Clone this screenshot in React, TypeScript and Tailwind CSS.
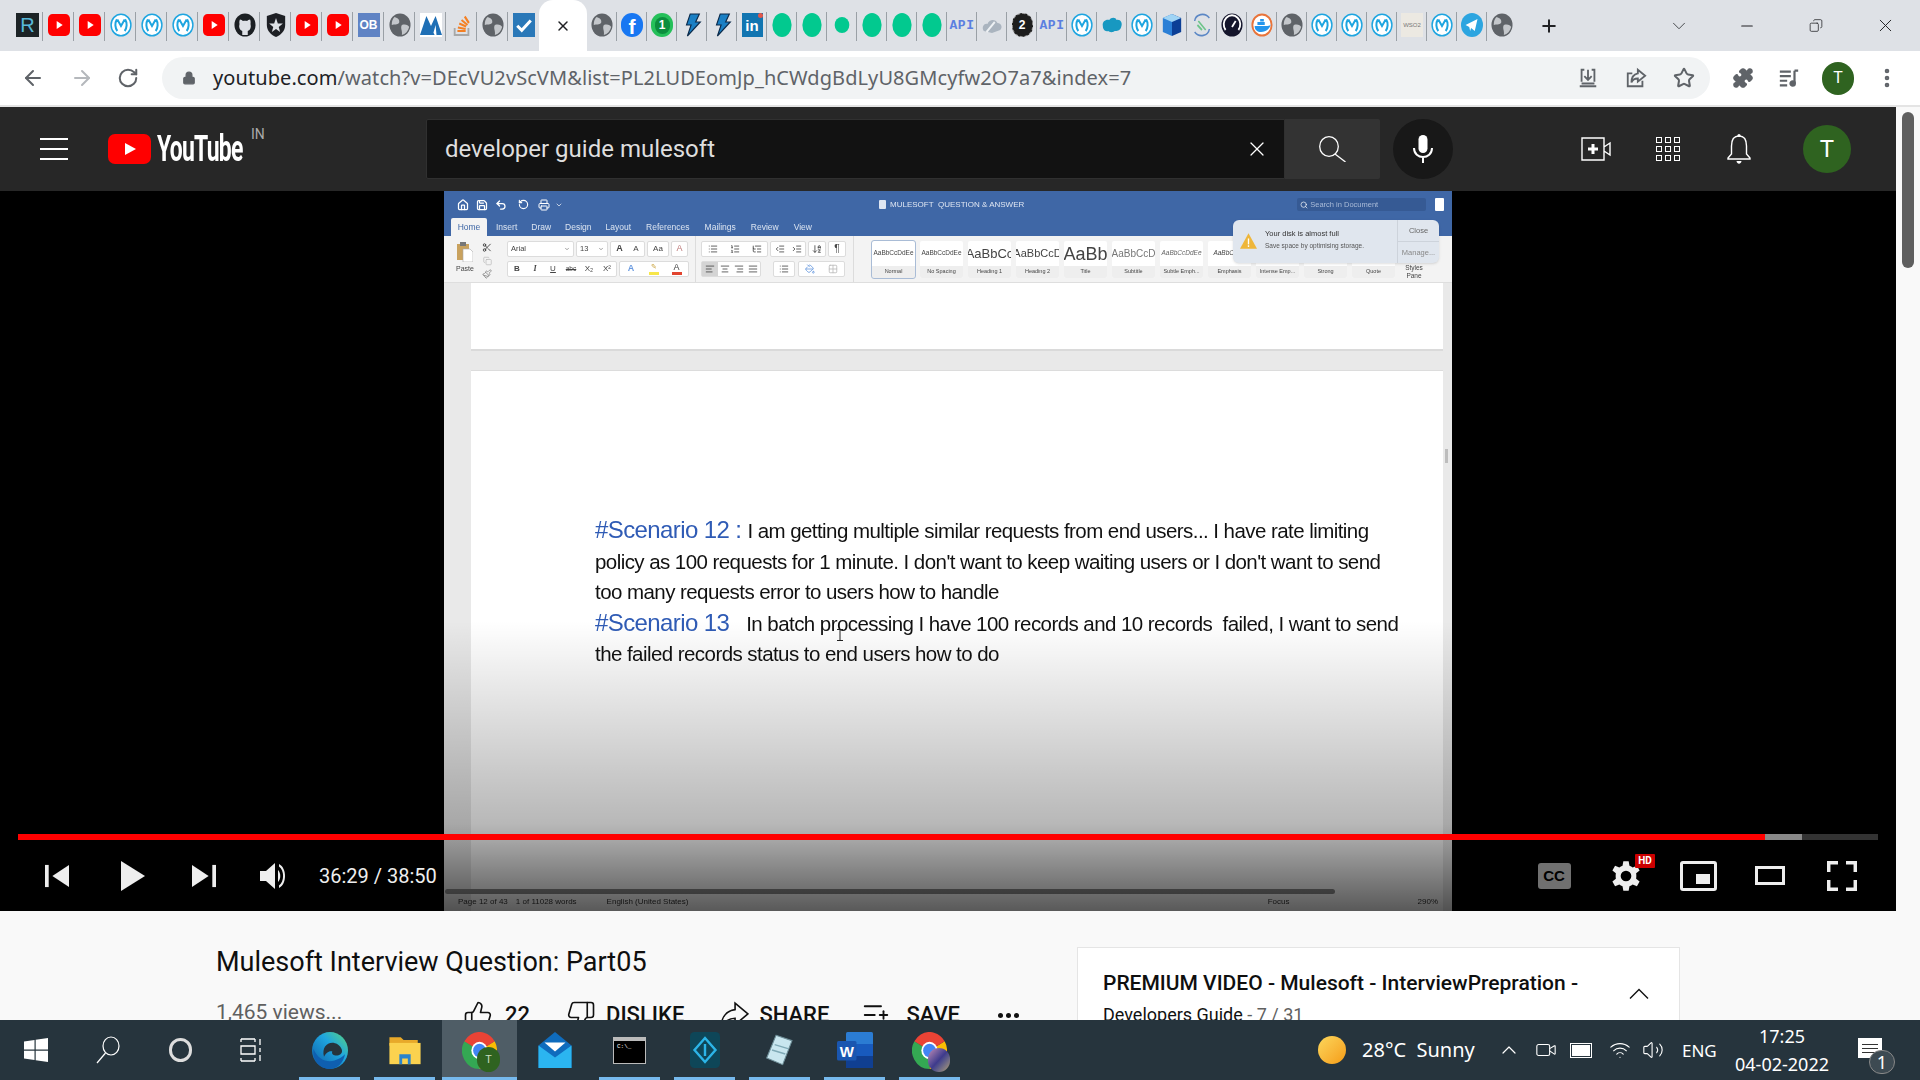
import type { ReactNode } from "react"
import { AlignCenter, AlignJustify, AlignLeft, AlignRight, ArrowDownAZ, ArrowLeft, ArrowRight, Bell, ChevronUp, Indent, List, ListOrdered, ListTree, Lock, Minus, Outdent, Plus, RotateCw, Search, Star, ThumbsDown, ThumbsUp, X, Home, Save, Undo2, RotateCcw, Printer, ChevronDown, Scissors, Copy, Paintbrush, MoreVertical, Puzzle, ListPlus, Video, Wifi, Volume2, PaintBucket, Grid2x2 } from "lucide-react"

const MuleIcon = () => (
  <svg viewBox="0 0 24 24" className="w-[22px] h-[24px]" preserveAspectRatio="none">
    <circle cx="12" cy="12" r="10.8" fill="#fff" stroke="#1ea5e0" strokeWidth="1.6" />
    <path d="M7.5 6.5 C5 10 5.5 15 8 18 M16.5 6.5 C19 10 18.5 15 16 18 M8 6.5 L12 13 L16 6.5" fill="none" stroke="#1ea5e0" strokeWidth="2.2" />
  </svg>
)
const YtIcon = () => (
  <svg viewBox="0 0 24 24" className="w-[22px] h-[24px]" preserveAspectRatio="none">
    <rect x="0" y="1" width="24" height="22" rx="5" fill="#f00" />
    <path d="M9.5 8 L16 12 L9.5 16Z" fill="#fff" />
  </svg>
)
const GlobeIcon = () => (
  <svg viewBox="0 0 24 24" className="w-[22px] h-[24px]" preserveAspectRatio="none">
    <circle cx="12" cy="12" r="11.5" fill="#5f6368" />
    <path d="M6 4 C10 5 12 7 11 10 C9 12 6 11 3 12 C3 8 4 6 6 4Z M14 12 C18 11 21 12 22 14 C21 18 18 21 14 22 C15 18 12 15 14 12Z" fill="#c4c7cb" />
  </svg>
)
const GreenIcon = ({ small }: { small?: boolean }) => (
  <svg viewBox="0 0 24 24" className="w-[22px] h-[24px]" preserveAspectRatio="none">
    <ellipse cx="12" cy="12" rx={small ? 8 : 10.5} ry={small ? 8 : 12} fill="#02c98f" />
  </svg>
)
const BoltIcon = () => (
  <svg viewBox="0 0 24 24" className="w-[22px] h-[24px]" preserveAspectRatio="none">
    <path d="M10 1 H20 L16 9 H21 L7 23 L11 12 H6Z" fill="#1a7fc4" stroke="#0b2a4a" strokeWidth="1.2" />
  </svg>
)
const ApiIcon = () => (
  <span className="text-[13px] font-bold leading-none text-[#5b7fe0] tracking-[0.5px] font-['Liberation_Mono',monospace]">API</span>
)

const Favicon = ({ kind }: { kind: string }) => {
  if (kind === "m") return <MuleIcon />
  if (kind === "yt") return <YtIcon />
  if (kind === "globe") return <GlobeIcon />
  if (kind === "g") return <GreenIcon />
  if (kind === "gs") return <GreenIcon small />
  if (kind === "bolt") return <BoltIcon />
  if (kind === "api") return <ApiIcon />
  if (kind === "r")
    return (
      <div className="w-[23px] h-[24px] bg-[#1c2326] flex items-center justify-center text-[20px] leading-none text-[#58b7d8] font-['Liberation_Sans',sans-serif]">R</div>
    )
  if (kind === "ob")
    return (
      <div className="w-[22px] h-[24px] bg-[#5f83c4] flex items-center justify-center text-[12px] font-bold leading-none text-white font-['Liberation_Sans',sans-serif]">OB</div>
    )
  if (kind === "check")
    return (
      <div className="w-[22px] h-[24px] bg-[#2a78b8] flex items-center justify-center">
        <svg viewBox="0 0 24 24" className="w-[18px] h-[18px]" fill="none" stroke="#fff" strokeWidth="4"><path d="M3 13 L9 19 L21 6" /></svg>
      </div>
    )
  if (kind === "in")
    return (
      <div className="relative w-[21px] h-[24px] bg-[#1275b1] flex items-center justify-center text-[15px] font-bold leading-none text-white font-['Liberation_Sans',sans-serif]">
        in
        <span className="absolute right-0 top-0 w-[5px] h-[5px] rounded-full bg-[#e2574c]"></span>
      </div>
    )
  if (kind === "fb")
    return (
      <div className="w-[22px] h-[24px] rounded-full bg-[#1877f2] flex items-end justify-center overflow-hidden text-[21px] font-bold leading-[21px] text-white font-['Liberation_Sans',sans-serif]">f</div>
    )
  if (kind === "wa")
    return (
      <div className="w-[22px] h-[24px] rounded-full bg-[#25c05a] flex items-center justify-center">
        <span className="w-[15px] h-[17px] rounded-full bg-[#0c8e3e] flex items-center justify-center text-[12px] font-bold leading-none text-white font-['Liberation_Sans',sans-serif]">1</span>
      </div>
    )
  if (kind === "two")
    return (
      <div className="w-[21px] h-[24px] rounded-full bg-[#1d1d1d] border border-dashed border-[#888] flex items-center justify-center text-[12px] font-bold leading-none text-white font-['Liberation_Sans',sans-serif]">2</div>
    )
  if (kind === "wso")
    return (
      <div className="w-[22px] h-[24px] bg-[#ece9e2] flex items-center justify-center text-[6px] leading-none text-[#777] font-['Liberation_Sans',sans-serif]">WSO2</div>
    )
  return (
    <svg viewBox="0 0 24 24" className="w-[22px] h-[24px]" preserveAspectRatio="none">
      {kind === "gh" && (
        <>
          <circle cx="12" cy="12" r="11.5" fill="#1b1f23" />
          <path d="M9 22 V18 C6 17 5 14 6 11 C5.6 9 6 7.5 6.5 6.5 C8 6.5 9 7.5 9.7 8 C11 7.6 13 7.6 14.3 8 C15 7.5 16 6.5 17.5 6.5 C18 7.5 18.4 9 18 11 C19 14 18 17 15 18 V22Z" fill="#dee1e6" />
        </>
      )}
      {kind === "auth" && (
        <>
          <path d="M12 0 L22 3 V12 C22 18 17 22 12 24 C7 22 2 18 2 12 V3Z" fill="#1d1f24" />
          <path d="M12 5 L14 10.5 H19.5 L15 14 L16.5 19 L12 16 L7.5 19 L9 14 L4.5 10.5 H10Z" fill="#dee1e6" />
        </>
      )}
      {kind === "mtn" && (
        <>
          <rect width="24" height="24" fill="#fff" />
          <path d="M0 22 L7 3 L12 13 L17 3 L24 22 H18 L17 12 L14 22Z M5 22 L12 15 L16 22Z" fill="#1f6fb5" />
        </>
      )}
      {kind === "so" && (
        <>
          <path d="M4 15 V22 H19 V15" fill="none" stroke="#a8a8a8" strokeWidth="2" />
          <path d="M7 18 H16 M7.5 14.5 L16 16 M9 10.5 L16.5 13.5 M11.5 7 L18 12 M15 3.5 L19.5 10" stroke="#f48024" strokeWidth="2.2" />
        </>
      )}
      {kind === "cloud" && (
        <>
          <path d="M3 18 C0 14 4 10 7 11 C9 6 16 6 18 10 C22 10 24 14 21 17 L12 20Z" fill="#aab4bf" />
          <path d="M6 19 L15 9" stroke="#eef1f4" strokeWidth="2" />
        </>
      )}
      {kind === "sf" && <path d="M2 13 C1 8 6 6 9 7 C11 4 16 4 17 7 C21 6 24 10 22 14 C21 18 17 18 15 18 C12 20 9 19 8 18 C4 19 2 16 2 13Z" fill="#1798c1" />}
      {kind === "cube" && (
        <>
          <path d="M12 1 L22 5 V19 L12 23Z" fill="#0c3f96" />
          <path d="M12 1 L2 5 V19 L12 23Z" fill="#2b7fd6" />
          <path d="M12 1 L22 5 L12 9 L2 5Z" fill="#9fd4f5" />
        </>
      )}
      {kind === "s" && (
        <>
          <path d="M20 5 C15 -1 5 1 4 8 M4 19 C9 25 19 23 20 16" fill="none" stroke="#5b87c5" strokeWidth="1.6" />
          <path d="M8 8 L16 17 M7 12 L12 17" stroke="#6cc48a" strokeWidth="1.8" />
        </>
      )}
      {kind === "gauge" && (
        <>
          <circle cx="12" cy="12" r="11.5" fill="#14152b" />
          <path d="M5 17 A9 9 0 1 1 19 17" fill="none" stroke="#fff" strokeWidth="2" />
          <path d="M12 14 L16 8" stroke="#fff" strokeWidth="2" />
        </>
      )}
      {kind === "docker" && (
        <>
          <circle cx="12" cy="12" r="10.5" fill="#fff" stroke="#e8743b" strokeWidth="2" />
          <path d="M4 13 H18 C20 13 21 12 21.5 11 C21 15 17 19 11 19 C7 19 4 17 4 13Z" fill="#2496ed" />
          <rect x="7" y="9" width="8" height="3" fill="#2496ed" />
          <rect x="10" y="6" width="4" height="2.5" fill="#2496ed" />
        </>
      )}
      {kind === "tg" && (
        <>
          <circle cx="12" cy="12" r="12" fill="#2ca5e0" />
          <path d="M5 12 L18 6 L15 18 L11 15 L10 18 L9 14Z" fill="#fff" />
        </>
      )}
    </svg>
  )
}

const leftTabs = ["r", "yt", "yt", "m", "m", "m", "yt", "gh", "auth", "yt", "yt", "ob", "globe", "mtn", "so", "globe", "check"]
const rightTabs = ["globe", "fb", "wa", "bolt", "bolt", "in", "g", "g", "gs", "g", "g", "g", "api", "cloud", "two", "api", "m", "sf", "m", "cube", "s", "gauge", "docker", "globe", "m", "m", "m", "wso", "m", "tg", "globe"]

function TabStrip() {
  return (
    <div className="h-[51px] shrink-0 bg-[#dee1e6] flex items-stretch pl-[12px]">
      {leftTabs.map((t, i) => (
        <div key={i} className="w-[31px] flex items-center justify-center relative pb-[1px]">
          <Favicon kind={t} />
          {i < 16 && <span className="absolute right-0 top-[12px] h-[29px] w-px bg-[#9aa0a6]"></span>}
        </div>
      ))}
      <div className="w-[48px] mt-0 bg-white rounded-t-[14px] flex items-center justify-center">
        <X className="w-[16px] h-[18px] text-[#202124]" strokeWidth={2.2} />
      </div>
      {rightTabs.map((t, i) => (
        <div key={i} className="w-[30px] flex items-center justify-center relative pb-[1px]">
          <Favicon kind={t} />
          {i < 30 && <span className="absolute right-0 top-[12px] h-[29px] w-px bg-[#9aa0a6]"></span>}
        </div>
      ))}
      <div className="ml-[22px] w-[20px] flex items-center justify-center">
        <Plus className="w-[22px] h-[22px] text-[#202124]" strokeWidth={2.4} />
      </div>
      <div className="ml-[112px] w-[16px] flex items-center justify-center">
        <ChevronDown className="w-[22px] h-[22px] shrink-0 text-[#3c4043]" strokeWidth={1} />
      </div>
      <div className="ml-[52px] w-[16px] flex items-center justify-center">
        <Minus className="w-[18px] h-[18px] shrink-0 text-[#202124]" strokeWidth={1.5} />
      </div>
      <div className="ml-[53px] w-[16px] flex items-center justify-center">
        <Copy className="w-[14px] h-[19px] text-[#202124] -scale-x-100" strokeWidth={1.3} />
      </div>
      <div className="ml-[52px] w-[18px] flex items-center justify-center">
        <X className="w-[21px] h-[21px] shrink-0 text-[#202124]" strokeWidth={1.1} />
      </div>
    </div>
  )
}

function AddressBar() {
  return (
    <div className="h-[56px] shrink-0 bg-white border-b-2 border-[#e4e4e4] flex items-center">
      <div className="w-[162px] flex items-center">
        <ArrowLeft className="ml-[21px] w-[24px] h-[24px] text-[#5f6368]" strokeWidth={2} />
        <ArrowRight className="ml-[25px] w-[24px] h-[24px] text-[#b5b8bc]" strokeWidth={2} />
        <RotateCw className="ml-[23px] w-[22px] h-[22px] text-[#5f6368]" strokeWidth={2.2} />
      </div>
      <div className="w-[1548px] h-[42px] rounded-full bg-[#f1f3f4] flex items-center">
        <Lock className="ml-[20px] w-[14px] h-[16px] text-[#5f6368] fill-[#5f6368]" strokeWidth={2} />
        <div className="ml-[17px] text-[20px] leading-none tracking-[0.08px] text-[#5f6368] font-['Noto_Sans',sans-serif] whitespace-nowrap">
          <span className="text-[#202124]">youtube.com</span>/watch?v=DEcVU2vScVM&amp;list=PL2LUDEomJp_hCWdgBdLyU8GMcyfw2O7a7&amp;index=7
        </div>
        <div className="ml-auto flex items-center gap-[26px] pr-[15px] text-[#5f6368]">
          <svg viewBox="0 0 24 24" className="w-[22px] h-[24px]" fill="none" stroke="currentColor" strokeWidth="2">
            <path d="M5 16 V3 H8 M16 3 H19 V16 M12 3 V14 M8 10 L12 14 L16 10 M3 21 H21 M5 18 H19" />
          </svg>
          <svg viewBox="0 0 24 24" className="w-[22px] h-[24px]" fill="none" stroke="currentColor" strokeWidth="2">
            <path d="M14 3 L22 9.5 L14 16 V12.5 C10 12.5 8 14 7 17 C7 12 9 8 14 7Z M19 15 V21 H3 V7 H8" />
          </svg>
          <Star className="w-[22px] h-[24px]" strokeWidth={2.2} />
        </div>
      </div>
      <Puzzle className="ml-[22px] w-[22px] h-[24px] text-[#5f6368] fill-[#5f6368]" strokeWidth={1.5} />
      <svg viewBox="0 0 24 24" className="ml-[24px] w-[22px] h-[24px] text-[#5f6368]" fill="none" stroke="currentColor" strokeWidth="2.4">
        <path d="M2 5 H14 M2 10 H14 M2 15 H10 M2 20 H10 M18 4 V18 M18 4 H22" />
        <circle cx="16" cy="18" r="2.4" fill="currentColor" />
      </svg>
      <div className="ml-[22px] w-[32px] h-[33px] rounded-full bg-[#2f6320] flex items-center justify-center text-[16px] leading-none text-white font-['Roboto',sans-serif]">T</div>
      <MoreVertical className="ml-[21px] w-[24px] h-[24px] text-[#5f6368]" strokeWidth={2.6} />
    </div>
  )
}

function YtHeader() {
  return (
    <div className="h-[84px] shrink-0 bg-[#272727] flex items-center font-['Roboto',sans-serif]">
      <div className="ml-[40px] w-[28px] flex flex-col gap-[8px]">
        <span className="h-[2px] bg-white"></span>
        <span className="h-[2px] bg-white"></span>
        <span className="h-[2px] bg-white"></span>
      </div>
      <svg viewBox="0 0 43 30" className="ml-[40px] w-[43px] h-[30px]">
        <rect width="43" height="30" rx="7" fill="#f00" />
        <path d="M17 9 L28 15 L17 21Z" fill="#fff" />
      </svg>
      <div className="relative ml-[6px] w-[108px] h-[30px]">
        <span className="block origin-left scale-x-[0.62] text-[37px] leading-[30px] font-bold tracking-[-1.2px] text-white">YouTube</span>
        <span className="absolute left-[94px] -top-[7px] text-[14px] leading-none text-[#aaa]">IN</span>
      </div>
      <div className="ml-[161px] w-[859px] h-[60px] bg-[#121212] border border-[#303030] rounded-l-[2px] flex items-center pl-[18px] pr-[15px]">
        <span className="text-[24px] leading-none text-[#dedede]">developer guide mulesoft</span>
        <X className="ml-auto w-[24px] h-[26px] text-white" strokeWidth={1.2} />
      </div>
      <div className="w-[95px] h-[60px] bg-[#333] rounded-r-[2px] flex items-center justify-center">
        <svg viewBox="0 0 27 26" className="w-[27px] h-[26px]" fill="none" stroke="#fff" strokeWidth="1.3">
          <ellipse cx="10" cy="10.5" rx="9.3" ry="9.8" />
          <path d="M16 18 L26.5 26" />
        </svg>
      </div>
      <div className="ml-[13px] w-[60px] h-[60px] rounded-full bg-[#181818] flex items-center justify-center">
        <svg viewBox="0 0 20 28" className="w-[20px] h-[28px]" fill="none" stroke="#fff">
          <rect x="5.5" y="0" width="9" height="18" rx="4.5" fill="#fff" stroke="none" />
          <path d="M1 13 C1 25 19 25 19 13 M10 22 V28" strokeWidth="2" />
        </svg>
      </div>
      <svg viewBox="0 0 30 24" className="ml-[128px] w-[30px] h-[24px] text-white" fill="none" stroke="currentColor" strokeWidth="1.4">
        <path d="M1 1 H23 V23 H1Z M23 10 L29 6 V18 L23 14" />
        <path d="M12 7 V17 M7 12 H17" strokeWidth="3" />
      </svg>
      <div className="ml-[45px] grid grid-cols-3 gap-[3px]">
        {[1, 2, 3, 4, 5, 6, 7, 8, 9].map((n) => (
          <span key={n} className="w-[6px] h-[6px] border border-white"></span>
        ))}
      </div>
      <svg viewBox="0 0 24 32" className="ml-[47px] w-[24px] h-[32px]" fill="none" stroke="#fff" strokeWidth="1.4">
        <path d="M12 3 C6 3 4.5 8 4.5 13 V21 L1 25 V26 H23 V25 L19.5 21 V13 C19.5 8 18 3 12 3Z" />
        <circle cx="12" cy="2.5" r="1.6" fill="#fff" stroke="none" />
        <path d="M9.5 28 C10 31.5 14 31.5 14.5 28Z" fill="#fff" stroke="none" />
      </svg>
      <div className="ml-[52px] w-[48px] h-[48px] rounded-full bg-[#2f6320] flex items-center justify-center text-[24px] leading-none text-white">T</div>
    </div>
  )
}

const Rbtn = ({ children, w = 16 }: { children?: ReactNode; w?: number }) => (
  <div style={{ width: w }} className="h-[14px] flex items-center justify-center text-[#444]">{children}</div>
)
const Group = ({ children }: { children: ReactNode }) => (
  <div className="h-[16px] bg-white border border-[#dcdcdc] rounded-[2px] flex items-center">{children}</div>
)
const ri = "w-[10px] h-[10px]"

const styles = [
  { s: "AaBbCcDdEe", l: "Normal", c: "text-[6.5px]" },
  { s: "AaBbCcDdEe", l: "No Spacing", c: "text-[6.5px]" },
  { s: "AaBbCc", l: "Heading 1", c: "text-[13px]" },
  { s: "AaBbCcD", l: "Heading 2", c: "text-[11px]" },
  { s: "AaBb", l: "Title", c: "text-[18px]" },
  { s: "AaBbCcD", l: "Subtitle", c: "text-[10px] text-[#777]" },
  { s: "AaBbCcDdEe", l: "Subtle Emph...", c: "text-[6.5px] italic text-[#666]" },
  { s: "AaBbCcDd", l: "Emphasis", c: "text-[6.5px] italic" },
  { s: "AaBbCcDd", l: "Intense Emp...", c: "text-[6.5px] italic text-[#2f5597]" },
  { s: "AaBbCcDd", l: "Strong", c: "text-[6.5px] font-bold" },
  { s: "AaBbCcDd", l: "Quote", c: "text-[6.5px] italic" },
]

function WordRibbon() {
  return (
    <div className="shrink-0 text-[#444] font-['Liberation_Sans',sans-serif]">
      <div className="h-[45px] bg-[#3f67a6] relative">
        <div className="h-[27px] flex items-center pl-[13px] text-white">
          <Home className="w-[12px] h-[12px]" strokeWidth={2.5} />
          <Save className="ml-[7px] w-[12px] h-[12px]" strokeWidth={2.5} />
          <Undo2 className="ml-[7px] w-[12px] h-[12px]" strokeWidth={2.5} />
          <RotateCcw className="ml-[11px] w-[11px] h-[11px]" strokeWidth={2.5} />
          <Printer className="ml-[9px] w-[12px] h-[12px]" strokeWidth={2} />
          <ChevronDown className="ml-[5px] w-[8px] h-[8px]" />
          <div className="ml-[316px] flex items-center gap-[4px] text-[8px] leading-none text-[#dfe6f2]">
            <span className="w-[7px] h-[9px] bg-[#dfe6f2] rounded-[1px]"></span>
            MULESOFT&nbsp; QUESTION &amp; ANSWER
          </div>
          <div className="ml-[273px] w-[129px] h-[13px] bg-[#365a94] rounded-[2px] flex items-center pl-[3px] gap-[2px] text-[7.5px] leading-none text-[#a9bbd8]">
            <Search className="w-[8px] h-[8px] text-white" /> Search in Document
          </div>
          <span className="ml-[9px] w-[9px] h-[13px] bg-white rounded-[1px]"></span>
        </div>
        <div className="h-[18px] flex items-stretch pl-[7px] text-[8.5px] leading-none text-[#dbe4f1]">
          <div className="w-[36px] bg-[#f3f3f3] rounded-t-[2px] text-[#3f67a6] flex items-center justify-center">Home</div>
          <div className="flex items-center gap-[14px] pl-[9px]">
            <span>Insert</span>
            <span>Draw</span>
            <span>Design</span>
            <span className="mr-[1px]">Layout</span>
            <span className="mr-[1px]">References</span>
            <span className="mr-[1px]">Mailings</span>
            <span className="mr-[1px]">Review</span>
            <span>View</span>
          </div>
        </div>
      </div>
      <div className="h-[47px] bg-[#f3f3f3] border-b border-[#dedede] flex">
        <div className="w-[63px] flex pl-[9px] pt-[6px]">
          <div className="w-[24px] flex flex-col items-center">
            <svg viewBox="0 0 16 20" className="w-[16px] h-[20px]">
              <rect x="0" y="2" width="12" height="16" fill="#c9a25e" />
              <rect x="3" y="0" width="6" height="4" fill="#777" />
              <path d="M6 7 H13 L16 10 V20 H6Z" fill="#fff" stroke="#aaa" strokeWidth="0.6" />
            </svg>
            <span className="mt-[3px] text-[7px] leading-none">Paste</span>
          </div>
          <div className="ml-[5px] flex flex-col items-center gap-[3px]">
            <Scissors className="w-[10px] h-[11px] text-[#333]" />
            <Copy className="w-[9px] h-[10px] text-[#bbb]" />
            <Paintbrush className="w-[10px] h-[10px] text-[#888]" />
          </div>
        </div>
        <div className="w-[189px] flex flex-col gap-[4px] pt-[5px] border-r border-[#dcdcdc]">
          <div className="flex gap-[2px]">
            <div className="w-[67px] h-[16px] bg-white border border-[#dcdcdc] rounded-[2px] flex items-center px-[3px] text-[7.5px] leading-none">Arial<ChevronDown className="ml-auto w-[6px] h-[6px]" /></div>
            <div className="w-[32px] h-[16px] bg-white border border-[#dcdcdc] rounded-[2px] flex items-center px-[3px] text-[7.5px] leading-none">13<ChevronDown className="ml-auto w-[6px] h-[6px]" /></div>
            <Group><Rbtn w={17}><span className="text-[9px] font-bold">A</span></Rbtn><Rbtn w={16}><span className="text-[8px]">A</span></Rbtn></Group>
            <Group><Rbtn w={20}><span className="text-[8px]">Aa</span></Rbtn></Group>
            <Group><Rbtn w={15}><span className="text-[9px] text-[#b77]">A</span></Rbtn></Group>
          </div>
          <div className="flex gap-[2px]">
            <Group>
              <Rbtn w={18}><span className="text-[8px] font-bold">B</span></Rbtn>
              <Rbtn w={18}><span className="text-[8px] italic font-['Liberation_Serif',serif] font-bold">I</span></Rbtn>
              <Rbtn w={18}><span className="text-[8px] underline">U</span></Rbtn>
              <Rbtn w={18}><span className="text-[6.5px] line-through">abc</span></Rbtn>
              <Rbtn w={18}><span className="text-[8px]">X₂</span></Rbtn>
              <Rbtn w={18}><span className="text-[8px]">X²</span></Rbtn>
            </Group>
            <Group>
              <Rbtn w={22}><span className="text-[9px] font-bold text-[#6b9be0]">A</span></Rbtn>
              <Rbtn w={23}><span className="w-[10px] h-[12px] border-b-[3px] border-[#f7e649] text-[#c9a23c] text-[7px] leading-none text-center">✎</span></Rbtn>
              <Rbtn w={23}><span className="w-[10px] h-[12px] border-b-[3px] border-[#e2442f] text-[9px] leading-[9px] text-center">A</span></Rbtn>
            </Group>
          </div>
        </div>
        <div className="w-[158px] flex flex-col gap-[4px] pt-[5px] pl-[5px] border-r border-[#dcdcdc]">
          <div className="flex gap-[2px]">
            <Group><Rbtn w={22}><List className={ri} /></Rbtn><Rbtn w={22}><ListOrdered className={ri} /></Rbtn><Rbtn w={21}><ListTree className={ri} /></Rbtn></Group>
            <Group><Rbtn w={17}><Outdent className={ri} /></Rbtn><Rbtn w={17}><Indent className={ri} /></Rbtn></Group>
            <Group><Rbtn w={16}><ArrowDownAZ className={ri} /></Rbtn></Group>
            <Group><Rbtn w={16}><span className="text-[10px] leading-none">¶</span></Rbtn></Group>
          </div>
          <div className="flex">
            <Group>
              <Rbtn w={16}><span className="w-full h-full bg-[#d4d4d4] flex items-center justify-center"><AlignLeft className={ri} /></span></Rbtn>
              <Rbtn w={14}><AlignCenter className={ri} /></Rbtn>
              <Rbtn w={14}><AlignRight className={ri} /></Rbtn>
              <Rbtn w={14}><AlignJustify className={ri} /></Rbtn>
            </Group>
            <div className="ml-[12px]"><Group><Rbtn w={20}><List className={ri} /></Rbtn></Group></div>
            <div className="ml-[3px]"><Group><Rbtn w={22}><PaintBucket className="w-[10px] h-[10px] text-[#6b9be0]" /></Rbtn><Rbtn w={23}><Grid2x2 className="w-[10px] h-[10px] text-[#bbb]" /></Rbtn></Group></div>
          </div>
        </div>
        <div className="flex-1 pl-[18px] pt-[5px] flex gap-[5px] relative">
          {styles.map((st, i) => (
            <div key={i} className={`w-[43px] h-[37px] rounded-[2px] flex flex-col overflow-hidden bg-white ${i === 0 ? "outline outline-[#a9bcd6]" : ""}`}>
              <div className={`h-[25px] flex items-center justify-center whitespace-nowrap leading-none ${st.c}`}>{st.s}</div>
              <div className="h-[12px] bg-[#eeeeee] flex items-center justify-center text-[5.5px] leading-none whitespace-nowrap">{st.l}</div>
            </div>
          ))}
          <div className="ml-[2px] w-[24px] mt-[23px] text-[6.5px] leading-[8px] text-center">Styles Pane</div>
          <div className="absolute left-[379px] -top-[16px] w-[206px] h-[43px] rounded-[6px] bg-[#e0e6ee] flex shadow-sm">
            <svg viewBox="0 0 20 18" className="ml-[7px] mt-[13px] w-[17px] h-[16px]"><path d="M10 0 L20 18 H0Z" fill="#eeb63a" /><rect x="9.2" y="6" width="1.6" height="7" fill="#fff" /><rect x="9.2" y="14" width="1.6" height="2" fill="#fff" /></svg>
            <div className="ml-[8px] pt-[10px] leading-none">
              <div className="text-[7.5px] text-[#333]">Your disk is almost full</div>
              <div className="mt-[5px] text-[6.5px] text-[#555] whitespace-nowrap">Save space by optimising storage.</div>
            </div>
            <div className="ml-auto w-[42px] border-l border-[#cdd3db] flex flex-col text-[7.5px] leading-none text-[#666]">
              <div className="flex-1 flex items-center justify-center border-b border-[#cdd3db]">Close</div>
              <div className="flex-1 flex items-center justify-center text-[#888]">Manage...</div>
            </div>
          </div>
        </div>
      </div>
    </div>
  )
}

function WordFrame() {
  return (
    <div className="w-[1008px] h-full bg-[#e9e9e9] flex flex-col relative overflow-hidden blur-[0.4px]">
      <WordRibbon />
      <div className="flex-1 min-h-0 pl-[27px] pr-[9px] flex flex-col">
        <div className="h-[68px] shrink-0 bg-white border-b-2 border-[#dadada]"></div>
        <div className="mt-[19px] flex-1 bg-white border-t border-[#dcdcdc] pl-[124px] font-['Liberation_Sans',sans-serif]">
          <div className="pt-[144px] w-[860px] text-[20.5px] leading-[30.5px] text-[#111] tracking-[-0.56px] whitespace-nowrap">
            <div><span className="text-[24px] text-[#2f5bb5] mr-[6px] tracking-[-0.6px]">#Scenario 12 :</span>I am getting multiple similar requests from end users... I have rate limiting</div>
            <div>policy as 100 requests for 1 minute. I don't want to keep waiting users or I don't want to send</div>
            <div>too many requests error to users how to handle</div>
            <div><span className="text-[24px] text-[#2f5bb5] mr-[17px] tracking-[-0.6px]">#Scenario 13</span>In batch processing I have 100 records and 10 records&nbsp; failed, I want to send</div>
            <div>the failed records status to end users how to do</div>
          </div>
        </div>
      </div>
      <svg viewBox="0 0 6 12" className="absolute left-[393px] top-[438px] w-[6px] h-[12px]" fill="none" stroke="#222" strokeWidth="1"><path d="M0 0.5 H6 M3 0.5 V11.5 M0 11.5 H6" /></svg>
      <span className="absolute right-[4px] top-[258px] w-[3px] h-[14px] bg-[#bdbdbd]"></span>
      <div className="absolute inset-x-0 bottom-[15px] h-[7px] pl-[1px]">
        <div className="w-[890px] h-[5px] rounded-full bg-[#8c8c8c]"></div>
      </div>
      <div className="absolute inset-x-0 bottom-0 h-[18px] flex items-center pl-[14px] pr-[14px] gap-[8px] text-[8px] leading-none text-[#333] font-['Liberation_Sans',sans-serif]">
        <span>Page 12 of 43</span><span>1 of 11028 words</span><span className="ml-[22px]">English (United States)</span>
        <span className="ml-auto">Focus</span><span className="ml-[120px]">290%</span>
      </div>
    </div>
  )
}

function PlayerControls() {
  const cell = "h-full flex items-center justify-center shrink-0"
  return (
    <div className="absolute inset-x-0 bottom-0 px-[18px]">
      <div className="h-[6px] flex bg-[#333]">
        <div className="w-[1747px] bg-[#f00]"></div>
        <div className="w-[37px] bg-[#888]"></div>
      </div>
      <div className="h-[71px] flex items-center text-[#eee] font-['Roboto',sans-serif]">
        <div className={`${cell} w-[78px]`}>
          <svg viewBox="0 0 26 24" className="w-[24px] h-[24px]" fill="#eee"><rect x="0" width="4" height="24" /><path d="M26 0 V24 L8 12Z" /></svg>
        </div>
        <div className={`${cell} w-[74px]`}>
          <svg viewBox="0 0 24 30" className="w-[24px] h-[30px]" fill="#eee"><path d="M0 0 L24 15 L0 30Z" /></svg>
        </div>
        <div className={`${cell} w-[68px]`}>
          <svg viewBox="0 0 26 24" className="w-[24px] h-[24px]" fill="#eee"><rect x="22" width="4" height="24" /><path d="M0 0 V24 L18 12Z" /></svg>
        </div>
        <div className={`${cell} w-[72px]`}>
          <svg viewBox="0 0 28 28" className="w-[28px] h-[28px]" fill="#eee">
            <path d="M0 9 H6 L15 1 V27 L6 19 H0Z" />
            <path d="M18 8 C21 11 21 17 18 20Z" />
            <path d="M19 2 C27 6 27 22 19 26 L19 23.5 C24.5 20 24.5 8 19 4.5Z" />
          </svg>
        </div>
        <span className="ml-[9px] text-[20px] leading-none whitespace-nowrap">36:29 / 38:50</span>
        <div className="ml-auto flex h-full items-center">
          <div className={`${cell} w-[72px]`}>
            <div className="w-[33px] h-[26px] rounded-[3px] bg-[#707070] flex items-center justify-center text-[15px] font-black leading-none text-black font-['Liberation_Sans',sans-serif]">CC</div>
          </div>
          <div className={`${cell} w-[72px] relative`}>
            <svg viewBox="0 0 24 24" className="w-[32px] h-[32px]" fill="#eee">
              <path fillRule="evenodd" d="M10 1 H14 L14.6 4.3 C15.5 4.6 16.3 5.1 17 5.6 L20.2 4.4 L22.2 7.8 L19.6 10 C19.8 11 19.8 13 19.6 14 L22.2 16.2 L20.2 19.6 L17 18.4 C16.3 18.9 15.5 19.4 14.6 19.7 L14 23 H10 L9.4 19.7 C8.5 19.4 7.7 18.9 7 18.4 L3.8 19.6 L1.8 16.2 L4.4 14 C4.2 13 4.2 11 4.4 10 L1.8 7.8 L3.8 4.4 L7 5.6 C7.7 5.1 8.5 4.6 9.4 4.3Z M12 8 A4 4 0 1 0 12 16 A4 4 0 1 0 12 8Z" />
            </svg>
            <span className="absolute left-[45px] top-[14px] w-[20px] h-[14px] rounded-[1px] bg-[#cc0000] flex items-center justify-center text-[10px] font-bold leading-none text-white">HD</span>
          </div>
          <div className={`${cell} w-[72px]`}>
            <div className="w-[37px] h-[30px] rounded-[3px] border-[3px] border-[#eee] flex items-end justify-end pr-[4px] pb-[4px]">
              <span className="w-[14px] h-[10px] bg-[#eee]"></span>
            </div>
          </div>
          <div className={`${cell} w-[72px]`}>
            <div className="w-[30px] h-[19px] border-[3px] border-[#eee]"></div>
          </div>
          <div className={`${cell} w-[72px]`}>
            <svg viewBox="0 0 30 30" className="w-[30px] h-[30px]" fill="none" stroke="#eee" strokeWidth="3.5">
              <path d="M1.7 11 V1.7 H11 M19 1.7 H28.3 V11 M1.7 19 V28.3 H11 M19 28.3 H28.3 V19" />
            </svg>
          </div>
        </div>
      </div>
    </div>
  )
}

function VideoPlayer() {
  return (
    <div className="h-[720px] shrink-0 bg-black relative flex justify-center overflow-hidden">
      <WordFrame />
      <div className="absolute inset-x-0 bottom-0 h-[290px] bg-linear-to-b from-transparent via-black/28 via-70% to-black/65"></div>
      <PlayerControls />
    </div>
  )
}

function VideoInfo() {
  return (
    <div className="flex-1 min-h-0 overflow-hidden bg-[#f9f9f9] flex pl-[216px] font-['Roboto',sans-serif]">
      <div className="w-[861px] shrink-0">
        <div className="mt-[37px] text-[27px] leading-[28px] text-[#0f0f0f] whitespace-nowrap">Mulesoft Interview Question: Part05</div>
        <div className="mt-[24px] flex items-center h-[30px] text-[#111] whitespace-nowrap">
          <span className="w-[247px] mb-[6px] text-[21px] leading-none text-[#606060]">1,465 views...</span>
          <ThumbsUp className="w-[30px] h-[30px] shrink-0" strokeWidth={1.3} />
          <span className="ml-[12px] text-[22px] font-medium leading-none">22</span>
          <ThumbsDown className="ml-[36px] w-[30px] h-[30px] shrink-0" strokeWidth={1.3} />
          <span className="ml-[10px] text-[22px] font-medium leading-none">DISLIKE</span>
          <svg viewBox="0 0 28 28" className="ml-[35px] w-[30px] h-[30px] shrink-0" fill="none" stroke="currentColor" strokeWidth="1.5">
            <path d="M15 3 L27 13 L15 23 V17 C9 17 5 20 2 26 C2 16 7 10 15 9Z" />
          </svg>
          <span className="ml-[10px] text-[22px] font-medium leading-none">SHARE</span>
          <ListPlus className="ml-[32px] w-[30px] h-[30px] shrink-0" strokeWidth={1.5} />
          <span className="ml-[15px] text-[22px] font-medium leading-none">SAVE</span>
          <div className="ml-[38px] flex gap-[3px]">
            <span className="w-[5px] h-[5px] rounded-full bg-[#111]"></span>
            <span className="w-[5px] h-[5px] rounded-full bg-[#111]"></span>
            <span className="w-[5px] h-[5px] rounded-full bg-[#111]"></span>
          </div>
        </div>
      </div>
      <div className="w-[603px] h-[200px] mt-[36px] bg-white border border-[#e5e5e5] pl-[25px] pr-[30px] pt-[21px] flex shrink-0">
        <div>
          <div className="text-[21px] font-medium leading-[28px] text-[#0f0f0f] whitespace-nowrap">PREMIUM VIDEO - Mulesoft - InterviewPrepration -</div>
          <div className="mt-[4px] text-[18px] leading-[28px] text-[#111] whitespace-nowrap">Developers Guide <span className="text-[#606060]">- 7 / 31</span></div>
        </div>
        <svg viewBox="0 0 20 10" className="ml-auto mt-[19px] w-[20px] h-[11px] shrink-0" fill="none" stroke="#111" strokeWidth="1.4"><path d="M1 10 L10 1 L19 10" /></svg>
      </div>
    </div>
  )
}

const Chrome = ({ w = 35, h = 37 }: { w?: number; h?: number }) => (
  <svg viewBox="0 0 24 24" style={{ width: w, height: h }} preserveAspectRatio="none">
    <g fill="none" strokeWidth="9.6" transform="rotate(-30 12 12)">
      <circle cx="12" cy="12" r="7.2" stroke="#fbbc04" pathLength="100" strokeDasharray="33.4 100" />
      <circle cx="12" cy="12" r="7.2" stroke="#34a853" pathLength="100" strokeDasharray="33.4 100" strokeDashoffset="-33.3" />
      <circle cx="12" cy="12" r="7.2" stroke="#ea4335" pathLength="100" strokeDasharray="33.4 100" strokeDashoffset="-66.6" />
    </g>
    <circle cx="12" cy="12" r="5.6" fill="#fff" />
    <circle cx="12" cy="12" r="4.4" fill="#4285f4" />
  </svg>
)

const taskItems = [
  {
    on: true,
    icon: (
      <svg viewBox="0 0 24 24" className="w-[36px] h-[37px]" preserveAspectRatio="none">
        <defs>
          <linearGradient id="edgeA" x1="0" y1="1" x2="1" y2="0"><stop offset="0" stopColor="#0c59a4" /><stop offset="0.6" stopColor="#1fa6e0" /><stop offset="1" stopColor="#5bd67a" /></linearGradient>
        </defs>
        <circle cx="12" cy="12" r="12" fill="url(#edgeA)" />
        <path d="M12 24 C5 24 0 18 1 11 C4 18 10 20 15 18.5 C18 17.5 20 16.5 22 14.5 C21 20 17 24 12 24Z" fill="#0f5fb0" />
        <path d="M8 16 C6 9 12 5 17 8 C20 10 21 13 19 14.5 C17 16 12.5 15.5 13.5 12.5 C11 12 9 14 8 16Z" fill="#26343d" />
      </svg>
    ),
  },
  {
    on: true,
    icon: (
      <svg viewBox="0 0 24 24" className="w-[34px] h-[34px]" preserveAspectRatio="none">
        <path d="M1 3 H9 L11 5 H21 V9 H1Z" fill="#e8a92a" />
        <rect x="1" y="7" width="22" height="15" fill="#fbd24f" />
        <path d="M8 22 V15 H16 V22 H14 V18 H10 V22Z" fill="#2b84cc" />
      </svg>
    ),
  },
  {
    on: true,
    icon: (
      <div className="relative w-[35px] h-[37px]">
        <Chrome />
        <span className="absolute -right-[3px] bottom-[-3px] w-[23px] h-[25px] rounded-full bg-[#2f6320] flex items-center justify-center text-[11px] leading-none text-[#c9dcc0] font-['Roboto',sans-serif]">T</span>
      </div>
    ),
  },
  {
    icon: (
      <svg viewBox="0 0 24 24" className="w-[36px] h-[36px]" preserveAspectRatio="none">
        <path d="M1 9 L12 0 L23 9 V24 H1Z" fill="#0f6cbd" />
        <path d="M1 9 L12 17 L23 9 V24 H1Z" fill="#2bb5f0" />
        <path d="M5 7 H19 L12 13Z" fill="#fff" />
      </svg>
    ),
  },
  {
    on: true,
    icon: (
      <div className="w-[33px] h-[27px] bg-black border-t-[4px] border-x border-b border-[#bbb] pl-[3px] pt-[3px] text-[6px] leading-none text-white font-['Liberation_Mono',monospace]">C:\_</div>
    ),
  },
  {
    on: true,
    icon: (
      <svg viewBox="0 0 24 24" className="w-[36px] h-[36px]" preserveAspectRatio="none">
        <rect x="2" width="20" height="24" rx="3" fill="#0e4658" />
        <path d="M12 4 L19 12 L12 20 L5 12Z M12 8 V16" fill="none" stroke="#2cb5e8" strokeWidth="1.6" />
      </svg>
    ),
  },
  {
    on: true,
    icon: (
      <svg viewBox="0 0 24 24" className="w-[32px] h-[32px]" preserveAspectRatio="none">
        <path d="M9 1 L21 5 L14 23 L2 18Z" fill="#c9e6ef" stroke="#6c8c96" strokeWidth="0.8" />
        <path d="M6 12 L16 15 M8 8 L18 11" stroke="#7fa9b6" strokeWidth="1" />
      </svg>
    ),
  },
  {
    on: true,
    icon: (
      <svg viewBox="0 0 24 24" className="w-[36px] h-[36px]" preserveAspectRatio="none">
        <rect x="6" y="0" width="18" height="24" rx="1" fill="#2b7cd3" />
        <rect x="6" y="16" width="18" height="8" fill="#103f91" />
        <rect x="6" y="8" width="18" height="8" fill="#185abd" />
        <rect x="0" y="6" width="13" height="13" rx="1" fill="#1a56b0" />
        <text x="6.5" y="16.5" textAnchor="middle" fontSize="10" fontWeight="700" fill="#fff" fontFamily="Liberation Sans">W</text>
      </svg>
    ),
  },
  {
    on: true,
    icon: (
      <div className="relative w-[35px] h-[37px]">
        <Chrome />
        <span className="absolute -right-[3px] bottom-[-3px] w-[22px] h-[24px] rounded-full bg-linear-to-br from-[#c88db5] via-[#3e3a8c] to-[#b9a16a]"></span>
      </div>
    ),
  },
]

function Taskbar() {
  return (
    <div className="h-[60px] shrink-0 bg-[#26343d] flex items-center text-white font-['Noto_Sans',sans-serif]">
      <div className="w-[72px] flex justify-center">
        <svg viewBox="0 0 24 24" className="w-[24px] h-[24px]" fill="#fff"><path d="M0 3.5 L10.5 2 V11.5 H0Z M11.7 1.8 L24 0 V11.5 H11.7Z M0 12.7 H10.5 V22 L0 20.5Z M11.7 12.7 H24 V24 L11.7 22.2Z" /></svg>
      </div>
      <div className="w-[72px] flex justify-center">
        <svg viewBox="0 0 24 28" className="w-[24px] h-[28px]" fill="none" stroke="#fff" strokeWidth="1.2">
          <ellipse cx="15" cy="10" rx="8" ry="9" />
          <path d="M9.5 17 L1 27" />
        </svg>
      </div>
      <div className="w-[72px] flex justify-center">
        <span className="w-[23px] h-[24px] rounded-full border-[3px] border-[#ddd]"></span>
      </div>
      <div className="w-[71px] flex justify-center">
        <svg viewBox="0 0 24 24" className="w-[24px] h-[24px]" fill="none" stroke="#fff" strokeWidth="1.3"><path d="M1 1 H15 M1 23 H15 M15 1 V4 M1 1 V4 M1 20 V23 M15 20 V23 M1 8 H15 V16 H1Z M20 1 V7 M20 10 V14 M20 17 V23" /></svg>
      </div>
      <div className="ml-[5px] flex h-full">
        {taskItems.map((it, i) => (
          <div key={i} className={`w-[75px] h-full relative flex items-center justify-center ${i === 2 ? "bg-[#4f5d66]" : ""}`}>
            {it.icon}
            {it.on && <span className={i === 2 ? "absolute bottom-0 inset-x-0 h-[3px] bg-[#76b9ed]" : "absolute bottom-0 inset-x-[7px] h-[3px] bg-[#76b9ed]"}></span>}
          </div>
        ))}
      </div>
      <div className="ml-[351px] w-[28px] h-[28px] rounded-full bg-linear-to-br from-[#fbd75a] to-[#f59c0c] shrink-0"></div>
      <span className="ml-[16px] w-[132px] shrink-0 text-[20px] leading-none whitespace-pre">28°C  Sunny</span>
      <ChevronUp className="ml-[3px] w-[24px] h-[24px] shrink-0" strokeWidth={1.2} />
      <Video className="ml-[14px] w-[22px] h-[24px] shrink-0" strokeWidth={1.2} />
      <div className="ml-[13px] w-[22px] h-[15px] shrink-0 border border-white p-[1px] flex"><span className="flex-1 bg-white"></span></div>
      <Wifi className="ml-[17px] w-[22px] h-[24px] shrink-0" strokeWidth={1.2} />
      <Volume2 className="ml-[11px] w-[22px] h-[24px] shrink-0" strokeWidth={1.2} />
      <span className="ml-[18px] w-[34px] shrink-0 text-[17px] leading-none">ENG</span>
      <div className="ml-[16px] w-[100px] shrink-0 flex flex-col items-center gap-[10px] text-[18px] leading-none">
        <span>17:25</span>
        <span>04-02-2022</span>
      </div>
      <div className="ml-[26px] relative w-[24px] h-[24px] shrink-0">
        <div className="w-[24px] h-[20px] bg-white flex flex-col justify-center gap-[3px] px-[4px]">
          <span className="h-px bg-[#333]"></span>
          <span className="h-px bg-[#333]"></span>
          <span className="h-px bg-[#333]"></span>
        </div>
        <span className="absolute -right-[13px] top-[12px] w-[26px] h-[24px] rounded-full bg-[#3d4a52] border border-[#888] flex items-center justify-center text-[18px] leading-none">1</span>
      </div>
    </div>
  )
}

export default function App() {
  return (
    <div className="w-[1920px] h-[1080px] flex flex-col overflow-hidden bg-white">
      <TabStrip />
      <AddressBar />
      <div className="flex-1 min-h-0 flex">
        <div className="w-[1896px] flex flex-col">
          <YtHeader />
          <VideoPlayer />
          <VideoInfo />
        </div>
        <div className="w-[24px] bg-[#f9f9f9] pt-[5px] flex justify-center">
          <div className="w-[12px] h-[156px] rounded-full bg-[#5f5f5f]"></div>
        </div>
      </div>
      <Taskbar />
    </div>
  )
}
